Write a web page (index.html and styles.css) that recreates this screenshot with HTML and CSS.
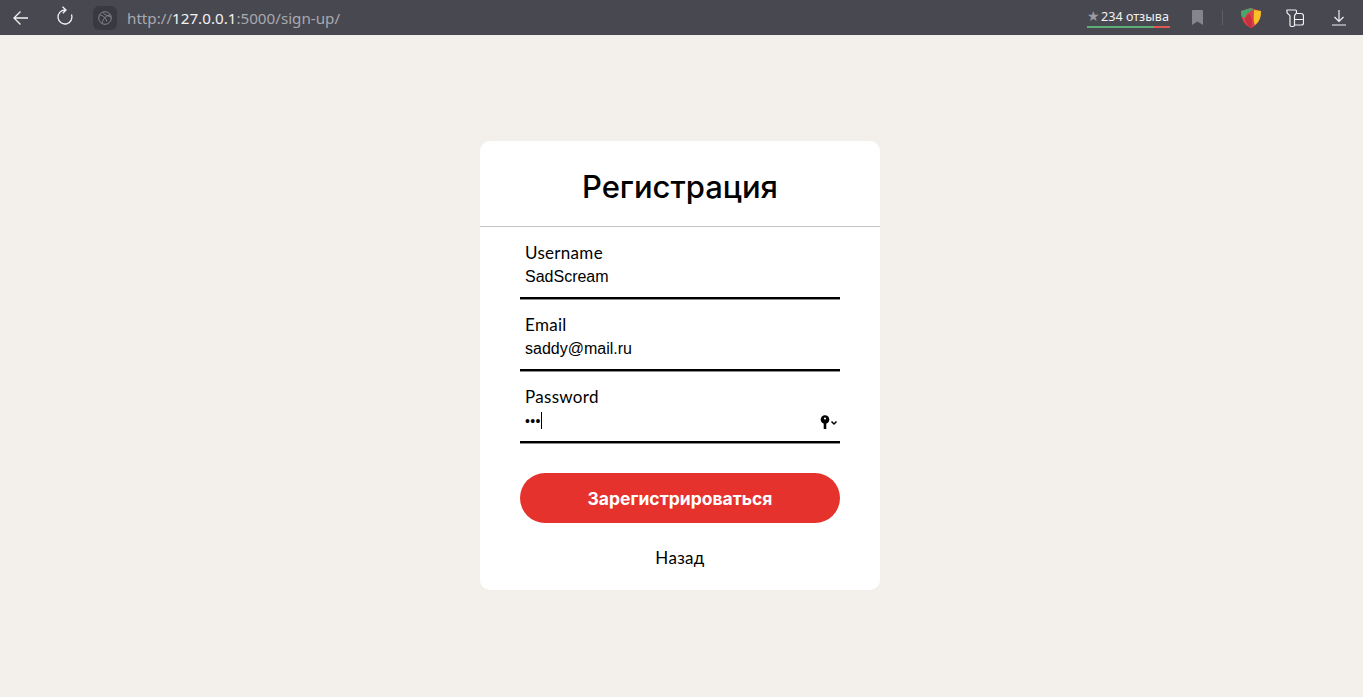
FILE: index.html
```html
<!DOCTYPE html>
<html lang="ru">
<head>
    <meta charset="UTF-8">
    <title>Регистрация</title>
    <meta name="viewport" content="width=device-width, initial-scale=1.0">
    <link rel="stylesheet" href="styles.css">
</head>
<body>

<div class="toolbar">
    <svg class="tool-icon back" width="18" height="16" viewBox="0 0 18 16" fill="none" stroke="#f2f2f2" stroke-width="1.3"><path d="M16 8H2M8.500 1.500 2 8l6.500 6.500"/></svg>
    <svg class="tool-icon reload" width="18" height="20" viewBox="0 0 18 20" fill="none" stroke="#f2f2f2" stroke-width="1.3"><path d="M15.500 8.400A7 7 0 1 1 9 4M6.500 .8 10 4 6.800 7.200"/></svg>
    <div class="site-badge">
        <svg width="14" height="14" viewBox="0 0 14 14" fill="none" stroke="#85858c" stroke-width="1"><circle cx="7" cy="7" r="6.300"/><path d="M1.500 4c3 .3 6 2 7.300 6.500M12.500 4C9 4 5 7 4 12.500M5 1c.5 2 2.500 3 8 5"/></svg>
    </div>
    <div class="url"><span class="url-dim">http://</span><span class="url-host">127.0.0.1</span><span class="url-dim">:5000/sign-up/</span></div>

    <div class="reviews">
        <div class="reviews-text"><span class="star">★</span>234 отзыва</div>
        <div class="reviews-bar"></div>
    </div>
    <svg class="bookmark" width="11" height="15" viewBox="0 0 11 15"><path d="M0 1q0-1 1-1h9q1 0 1 1v14l-5.500-3.500L0 15z" fill="#85858c"/></svg>
    <div class="sep"></div>
    <svg class="shield" width="22" height="20" viewBox="0 0 22 20">
        <path d="M1 3 11 0l10 3c0 8-3 14-10 17C4 17 1 11 1 3z" fill="#d9434e"/>
        <path d="M1 3 11 0l3 2C9 3 6 6 5 10L2 9C1 7 1 5 1 3z" fill="#4aa56b"/>
        <path d="M14 2l7 1c0 7-2 11-6 14-2-4-1-10-1-15z" fill="#f6c026"/>
        <path d="M9 6c3 3 4 8 2 14-3-2-5-5-6-9 1-2 2-4 4-5z" fill="#c9303f"/>
    </svg>
    <svg class="wallet" width="18" height="20" viewBox="0 0 18 20" fill="none" stroke="#f2f2f2" stroke-width="1.2"><path d="M1 2h8.500c.5 0 1 .5 1 1v1.500C10.500 6 8.500 6.500 8.500 8v9c0 1-.5 1.500-1.500 1.500H5.500c-1 0-1.500-.5-1.500-1.500V8C4 6.500 1 6 1 4.500z"/><path d="M10.500 5.500H15c1.500 0 2.500 1 2.500 2.500v7c0 1-1 2-2 2H8.500M8.500 11.500h9"/></svg>
    <svg class="download" width="14" height="16" viewBox="0 0 14 16" fill="none" stroke="#f2f2f2" stroke-width="1.2"><path d="M7 0v11M2.500 7 7 11.500 11.500 7M0 15h14"/></svg>
</div>

<div class="page">
    <form class="card">
        <h1 class="card-title">Регистрация</h1>
        <div class="fields">
            <label class="field">
                <span class="field-label">Username</span>
                <input class="field-input" type="text" value="SadScream">
            </label>
            <label class="field">
                <span class="field-label">Email</span>
                <input class="field-input" type="text" value="saddy@mail.ru">
            </label>
            <div class="field">
                <span class="field-label">Password</span>
                <div class="password-row">
                    <span class="dots">•••</span><span class="caret"></span>
                    <svg class="key" width="18" height="14" viewBox="0 0 18 14"><circle cx="5" cy="4.500" r="4.300" fill="#000"/><circle cx="5" cy="3.500" r="1.100" fill="#fff"/><path d="M3.700 7h2.600v7H3.700z" fill="#000"/><path d="M11.500 6.500 14 9l2.500-2.500" fill="none" stroke="#000" stroke-width="1.500"/></svg>
                </div>
            </div>
            <button class="submit" type="button">Зарегистрироваться</button>
            <a class="back-link" href="#">Назад</a>
        </div>
    </form>
</div>

</body>
</html>
```

FILE: styles.css
```css
html, body {
    height: 100%;
}

body {
    margin: 0;
    background: #f3f0eb;
    color: #000;
    font-family: 'Liberation Sans', Arial, sans-serif;
    overflow: hidden;
}

.toolbar {
    height: 35px;
    background: #484851;
    display: flex;
    align-items: center;
    padding-right: 17px;
    box-sizing: border-box;
}

.tool-icon {
    flex: none;
}

.back {
    margin-left: 12px;
}

.reload {
    margin-left: 26px;
    margin-bottom: 4px;
}

.site-badge {
    width: 24px;
    height: 24px;
    margin-left: 19px;
    border-radius: 6px;
    background: #393941;
    display: flex;
    align-items: center;
    justify-content: center;
}

.url {
    margin-left: 10px;
    font-family: 'Noto Sans', 'Open Sans', sans-serif;
    font-size: 15.2px;
    flex: 1;
}

.url-dim {
    color: #a9a9ae;
}

.url-host {
    color: #f2f2f2;
}

.reviews {
    width: 83px;
    margin-right: 22px;
}

.reviews-text {
    color: #f2f2f2;
    font-family: 'Noto Sans', 'Open Sans', sans-serif;
    font-size: 12.6px;
    line-height: 16px;
    white-space: nowrap;
}

.star {
    color: #9a9aa0;
    font-size: 14px;
    margin-right: 1px;
}

.reviews-bar {
    height: 2px;
    margin-top: 1px;
    background: linear-gradient(90deg, #5fae78 0 81%, #e0584f 81% 100%);
}

.bookmark {
    margin-right: 19px;
}

.sep {
    width: 1px;
    height: 15px;
    background: #5e5e66;
    margin-right: 17px;
}

.shield {
    margin-right: 24px;
}

.wallet {
    margin-right: 28px;
}

.page {
    display: flex;
    justify-content: center;
    padding: 106px 3px 0 0;
}

.card {
    width: 400px;
    height: 449px;
    background: #fff;
    border-radius: 10px;
}

.card-title {
    margin: 0;
    height: 85px;
    line-height: 92px;
    border-bottom: 1px solid #c4c4c4;
    text-align: center;
    font-family: Inter, 'Open Sans', sans-serif;
    font-size: 31px;
    font-weight: 500;
}

.fields {
    padding: 1px 40px 0;
    display: flex;
    flex-direction: column;
}

.field {
    display: block;
    height: 72px;
    box-sizing: border-box;
    padding-top: 14px;
}

.field-label {
    display: block;
    padding-left: 5px;
    font-family: Lato, 'Open Sans', sans-serif;
    font-size: 17px;
    letter-spacing: 0.3px;
    line-height: 21px;
}

.field-input {
    display: block;
    width: 100%;
    height: 36px;
    padding: 0 5px 6px;
    box-sizing: border-box;
    border: 0;
    border-bottom: 2px solid #000;
    box-shadow: 0 1px 0 #8a8a8a;
    outline: none;
    background: none;
    color: #000;
    font-family: 'Liberation Sans', Arial, sans-serif;
    font-size: 16px;
}

.password-row {
    height: 36px;
    padding: 5px 2px 0 5px;
    box-sizing: border-box;
    border-bottom: 2px solid #000;
    box-shadow: 0 1px 0 #8a8a8a;
    display: flex;
    align-items: flex-start;
}

.dots {
    font-size: 14px;
    line-height: 18px;
    letter-spacing: 0.3px;
}

.caret {
    width: 1px;
    height: 17px;
    background: #000;
}

.key {
    margin-left: auto;
    margin-top: 3px;
}

.submit {
    height: 50px;
    margin-top: 29px;
    border: 0;
    border-radius: 25px;
    background: #e5322d;
    color: #fff;
    font-family: Inter, 'Liberation Sans', sans-serif;
    font-size: 17.5px;
    font-weight: 700;
}

.back-link {
    margin-top: 24px;
    text-align: center;
    color: #000;
    text-decoration: none;
    font-family: Lato, 'Open Sans', sans-serif;
    font-size: 17px;
    letter-spacing: 0.3px;
    line-height: 21px;
}
```
